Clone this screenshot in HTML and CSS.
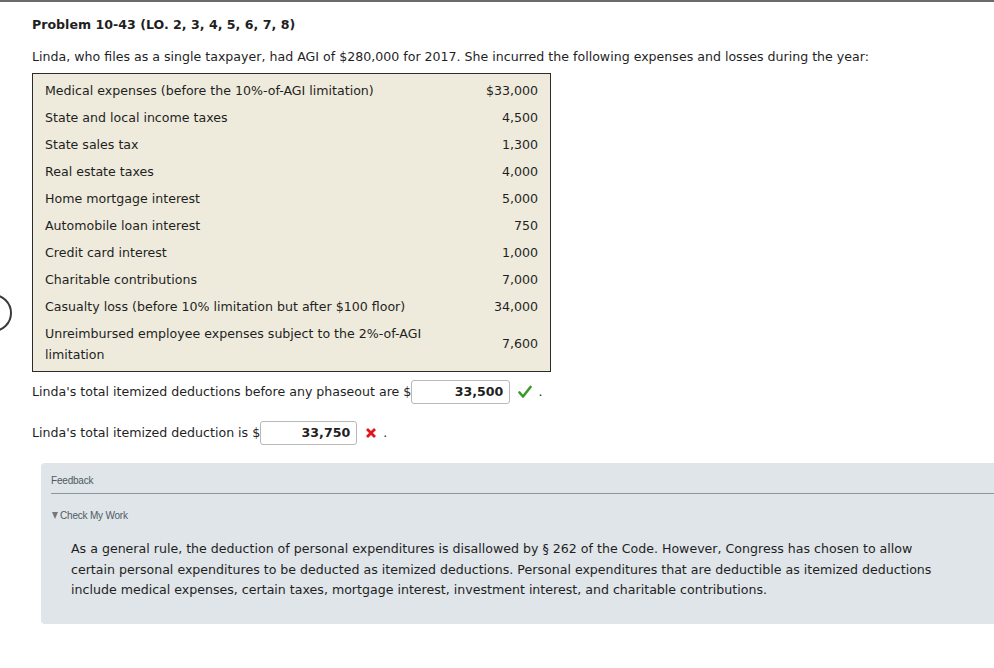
FILE: index.html
```
<!DOCTYPE html>
<html lang="en">
<head>
<meta charset="utf-8">
<title>Problem 10-43</title>
<link rel="stylesheet" href="styles.css">
</head>
<body>
<div class="topbar"></div>
<div class="side-circle"></div>
<main class="content">
  <h1 class="title">Problem 10-43 (LO. 2, 3, 4, 5, 6, 7, 8)</h1>
  <p class="intro">Linda, who files as a single taxpayer, had AGI of $280,000 for 2017. She incurred the following expenses and losses during the year:</p>
  <div class="expenses">
    <div class="row"><span class="label">Medical expenses (before the 10%-of-AGI limitation)</span><span class="amount">$33,000</span></div>
    <div class="row"><span class="label">State and local income taxes</span><span class="amount">4,500</span></div>
    <div class="row"><span class="label">State sales tax</span><span class="amount">1,300</span></div>
    <div class="row"><span class="label">Real estate taxes</span><span class="amount">4,000</span></div>
    <div class="row"><span class="label">Home mortgage interest</span><span class="amount">5,000</span></div>
    <div class="row"><span class="label">Automobile loan interest</span><span class="amount">750</span></div>
    <div class="row"><span class="label">Credit card interest</span><span class="amount">1,000</span></div>
    <div class="row"><span class="label">Charitable contributions</span><span class="amount">7,000</span></div>
    <div class="row"><span class="label">Casualty loss (before 10% limitation but after $100 floor)</span><span class="amount">34,000</span></div>
    <div class="row row-tall"><span class="label">Unreimbursed employee expenses subject to the 2%-of-AGI limitation</span><span class="amount">7,600</span></div>
  </div>
  <p class="answer">Linda's total itemized deductions before any phaseout are $<span class="field field-wide">33,500</span><svg class="mark" width="14" height="14" viewBox="0 0 14 14"><path d="M1.5 7.5 L5 11.5 L12.5 2" fill="none" stroke="#3c9a2c" stroke-width="2.6" stroke-linecap="round" stroke-linejoin="round"/></svg><span class="dot">.</span></p>
  <p class="answer">Linda's total itemized deduction is $<span class="field">33,750</span><svg class="mark" width="12" height="12" viewBox="0 0 12 12"><path d="M2 2 L10 10 M10 2 L2 10" fill="none" stroke="#e3141b" stroke-width="2.8" stroke-linecap="butt"/></svg><span class="dot">.</span></p>
  <section class="feedback">
    <div class="fb-head">Feedback</div>
    <div class="fb-toggle"><span class="tri"></span>Check My Work</div>
    <p class="fb-text">As a general rule, the deduction of personal expenditures is disallowed by § 262 of the Code. However, Congress has chosen to allow certain personal expenditures to be deducted as itemized deductions. Personal expenditures that are deductible as itemized deductions include medical expenses, certain taxes, mortgage interest, investment interest, and charitable contributions.</p>
  </section>
</main>
</body>
</html>
```
FILE: styles.css
```
html, body {
  margin: 0;
  padding: 0;
  background: #ffffff;
}
body {
  font-family: "DejaVu Sans", Verdana, sans-serif;
  font-size: 12.6px;
  color: #1f1f1f;
  overflow: hidden;
  width: 994px;
  height: 668px;
  position: relative;
}
.topbar {
  height: 2px;
  background: #6b6b6b;
}
.side-circle {
  position: absolute;
  left: -26px;
  top: 294px;
  width: 34px;
  height: 34px;
  border: 2px solid #3a3a3a;
  border-radius: 50%;
}
.content {
  padding: 15px 0 0 32px;
}
.title {
  margin: 0;
  font-size: 12.6px;
  font-weight: bold;
  line-height: 16px;
  color: #1f1f1f;
}
.intro {
  margin: 16px 0 0;
  line-height: 16px;
}
.expenses {
  margin-top: 8px;
  width: 493px;
  border: 1px solid #2b2b2b;
  background: #eeebdc;
  padding: 3px 12px 3px 12px;
}
.row {
  display: flex;
  justify-content: space-between;
  align-items: center;
  padding: 3px 0;
  line-height: 21px;
}
.row-tall .amount {
  margin-top: -2px;
}
.label {
  width: 395px;
}
.amount {
  text-align: right;
}
.answer {
  margin: 8px 0 0;
  display: flex;
  align-items: center;
  line-height: 24px;
  height: 24px;
}
.answer + .answer {
  margin-top: 17px;
}
.field {
  display: inline-block;
  box-sizing: border-box;
  width: 97px;
  height: 24px;
  border: 1px solid #b9b9b9;
  border-radius: 3px;
  text-align: right;
  padding-right: 6px;
  font-weight: bold;
  line-height: 22px;
  color: #1f1f1f;
}
.field-wide {
  width: 99px;
}
.mark {
  margin-left: 8px;
}
.dot {
  margin-left: 6px;
  color: #1f1f1f;
}
.feedback {
  margin: 18px 0 0 9px;
  background: #dfe5e8;
  border-radius: 4px 0 0 4px;
  height: 161px;
  padding: 0 0 0 10px;
}
.fb-head {
  font-family: "Liberation Sans", Arial, sans-serif;
  font-size: 10px;
  color: #4f5b63;
  letter-spacing: -0.2px;
  padding-top: 12px;
  height: 18px;
  border-bottom: 1px solid #8c969b;
}
.fb-toggle {
  font-family: "Liberation Sans", Arial, sans-serif;
  font-size: 10px;
  color: #4f5b63;
  letter-spacing: -0.2px;
  margin-top: 16px;
  display: flex;
  align-items: center;
}
.tri {
  width: 0;
  height: 0;
  border-left: 3px solid transparent;
  border-right: 3px solid transparent;
  border-top: 7px solid #777777;
  margin: 0 2px 0 1px;
}
.fb-text {
  margin: 18px 0 0 20px;
  width: 872px;
  line-height: 20.5px;
}
```
